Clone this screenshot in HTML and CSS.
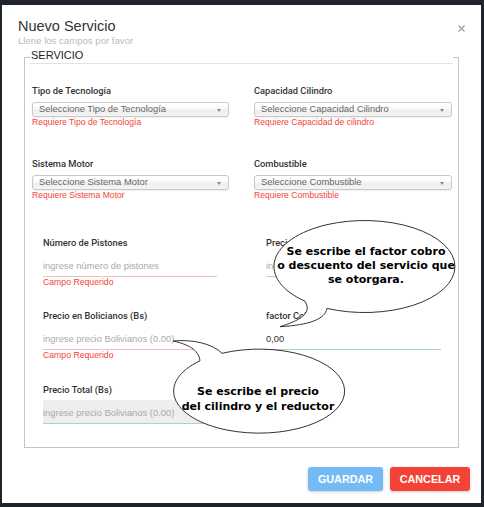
FILE: index.html
```html
<!DOCTYPE html>
<html lang="es">
<head>
<meta charset="utf-8">
<title>Nuevo Servicio</title>
<link rel="stylesheet" href="styles.css">
</head>
<body>
<div class="modal">
  <header class="modal-header">
    <div class="titles">
      <h1 class="title">Nuevo Servicio</h1>
      <p class="subtitle">Llene los campos por favor</p>
    </div>
    <button class="close" aria-label="Cerrar"><svg width="7" height="7" viewBox="0 0 7 7"><path d="M0.5 0.5L6.5 6.5M6.5 0.5L0.5 6.5" stroke="#9a9a9a" stroke-width="1.1"/></svg></button>
  </header>
  <div class="modal-body">
    <fieldset class="group">
      <legend>SERVICIO</legend>
      <div class="selects">
        <div class="field">
          <label class="lbl">Tipo de Tecnología</label>
          <div class="select"><span>Seleccione Tipo de Tecnología</span><i class="caret"></i></div>
          <div class="err">Requiere Tipo de Tecnología</div>
        </div>
        <div class="field">
          <label class="lbl">Capacidad Cilindro</label>
          <div class="select"><span>Seleccione Capacidad Cilindro</span><i class="caret"></i></div>
          <div class="err">Requiere Capacidad de cilindro</div>
        </div>
        <div class="field">
          <label class="lbl">Sistema Motor</label>
          <div class="select"><span>Seleccione Sistema Motor</span><i class="caret"></i></div>
          <div class="err">Requiere Sistema Motor</div>
        </div>
        <div class="field">
          <label class="lbl">Combustible</label>
          <div class="select"><span>Seleccione Combustible</span><i class="caret"></i></div>
          <div class="err">Requiere Combustible</div>
        </div>
      </div>
      <div class="inputs">
        <div class="field">
          <label class="lbl">Número de Pistones</label>
          <div class="input invalid">ingrese número de pistones</div>
          <div class="err">Campo Requerido</div>
        </div>
        <div class="field">
          <label class="lbl">Precio en Dólares ($us)</label>
          <div class="input valid">ingrese precio Dólares (0.00)</div>
        </div>
        <div class="field">
          <label class="lbl">Precio en Bolicianos (Bs)</label>
          <div class="input invalid">ingrese precio Bolivianos (0.00)</div>
          <div class="err">Campo Requerido</div>
        </div>
        <div class="field">
          <label class="lbl">factor Cobro</label>
          <div class="input valid filled">0,00</div>
        </div>
        <div class="field">
          <label class="lbl">Precio Total (Bs)</label>
          <div class="input valid disabled">ingrese precio Bolivianos (0.00)</div>
        </div>
      </div>
    </fieldset>
  </div>
  <footer class="modal-footer">
    <button class="btn btn-save">GUARDAR</button>
    <button class="btn btn-cancel">CANCELAR</button>
  </footer>

  <div class="bubble bubble-1">
    <svg width="190" height="120" viewBox="0 0 190 120"><path d="M35 86.2 A90.5 46 0 1 1 57 93.4 C55 104 40 110 10 111.7 C28 106 43 99 35 86.2 Z" fill="#fff" stroke="#333" stroke-width="1"/></svg>
    <div class="bubble-text">Se escribe el factor cobro<br>o descuento del servicio que<br>se otorgara.</div>
  </div>
  <div class="bubble bubble-2">
    <svg width="182" height="102" viewBox="0 0 182 102"><path d="M54 17.3 A85.5 42 0 1 1 32 24.8 C31 16 24 9 5 5 C25 3 45 8 54 17.3 Z" fill="#fff" stroke="#333" stroke-width="1"/></svg>
    <div class="bubble-text">Se escribe el precio<br>del cilindro y el reductor</div>
  </div>
</div>
</body>
</html>
```
FILE: styles.css
```css
* { box-sizing: border-box; }
html, body { margin: 0; }
body {
  background: #1e2429;
  font-family: "Liberation Sans", Arial, sans-serif;
  height: 507px;
  overflow: hidden;
}
.modal {
  position: relative;
  margin: 5px 0 0 2px;
  width: 479px;
  height: 498px;
  background: #fff;
}
.modal-header {
  display: flex;
  justify-content: space-between;
  align-items: flex-start;
  padding: 12px 16px 0 16px;
}
.title {
  margin: 0;
  font-size: 14.5px;
  line-height: 18px;
  font-weight: normal;
  color: #333;
}
.subtitle {
  margin: 0;
  font-size: 9.6px;
  line-height: 12px;
  color: #bbb;
}
.close {
  border: 0;
  background: none;
  padding: 0;
  margin-top: 8px;
  width: 7px;
  height: 7px;
  display: block;
}
.close svg { display: block; }
.modal-body { padding: 3px 22px 0 22px; }
.group {
  margin: 0;
  border: 1px solid #c4c4c4;
  padding: 0 5px 23px;
  min-width: 0;
}
.group legend {
  width: 100%;
  padding: 0 1px 2px;
  font-size: 11px;
  line-height: 11px;
  color: #222;
  border-bottom: 1px solid #e3e3e3;
}
.selects {
  display: grid;
  grid-template-columns: 197px 198px;
  column-gap: 25px;
  row-gap: 30px;
  margin: 21px 0 0 2px;
}
.lbl {
  display: block;
  font-family: Roboto, "Liberation Sans", sans-serif;
  font-weight: 500;
  font-size: 9.3px;
  line-height: 12px;
  color: #333;
  margin-bottom: 5px;
  white-space: nowrap;
}
.select {
  height: 15px;
  border: 1px solid #c8c8c8;
  border-radius: 3px;
  background: linear-gradient(#fff 20%, #f6f6f6 50%, #eee 52%, #f4f4f4 100%);
  box-shadow: 0 1px 1px rgba(0,0,0,0.06);
  display: flex;
  align-items: flex-start;
  padding: 0 7px 0 6px;
  font-size: 9.4px;
  line-height: 11px;
  color: #666;
}
.select span { flex: 1; white-space: nowrap; overflow: hidden; }
.caret {
  margin-top: 6px;
  width: 0;
  height: 0;
  border-left: 2px solid transparent;
  border-right: 2px solid transparent;
  border-top: 3px solid #888;
}
.err {
  font-size: 8.6px;
  line-height: 11px;
  color: #f44336;
  white-space: nowrap;
}
.inputs {
  display: grid;
  grid-template-columns: 174px 175px;
  column-gap: 49px;
  row-gap: 22.5px;
  margin: 35.5px 0 0 13px;
}
.inputs .lbl { margin-bottom: 4px; }
.inputs .err { font-size: 8.7px; }
.input {
  height: 24px;
  padding: 7px 0 4px;
  border-bottom: 1px solid #ddd;
  font-size: 9.4px;
  line-height: 12px;
  color: #aaa;
  white-space: nowrap;
  overflow: hidden;
}
.input.invalid { border-bottom-color: #f7bdb8; }
.input.valid { border-bottom-color: #aad9ac; }
.input.filled { color: #333; }
.input.disabled { background: #eee; }
.modal-footer {
  display: flex;
  justify-content: flex-end;
  gap: 7px;
  padding: 19.5px 11px 0 0;
}
.btn {
  height: 24px;
  border: 0;
  border-radius: 3px;
  padding: 0;
  font-family: "Liberation Sans", Arial, sans-serif;
  font-weight: bold;
  font-size: 10.8px;
  line-height: 24px;
  color: #fff;
  box-shadow: 0 1px 3px rgba(0,0,0,0.2);
}
.btn-save { background: #74bbf5; width: 75px; }
.btn-cancel { background: #f44336; width: 80px; }
.bubble {
  position: absolute;
  display: grid;
}
.bubble > * { grid-area: 1 / 1; }
.bubble svg { display: block; }
.bubble-text {
  font-family: "DejaVu Sans", sans-serif;
  font-weight: bold;
  font-size: 11px;
  color: #000;
  text-align: center;
  white-space: nowrap;
}
.bubble-1 { left: 268px; top: 210px; }
.bubble-1 .bubble-text { padding: 30px 0 0 2px; line-height: 14px; }
.bubble-2 { left: 166px; top: 331px; }
.bubble-2 .bubble-text { padding: 48px 2px 0 0; line-height: 15px; }
```
